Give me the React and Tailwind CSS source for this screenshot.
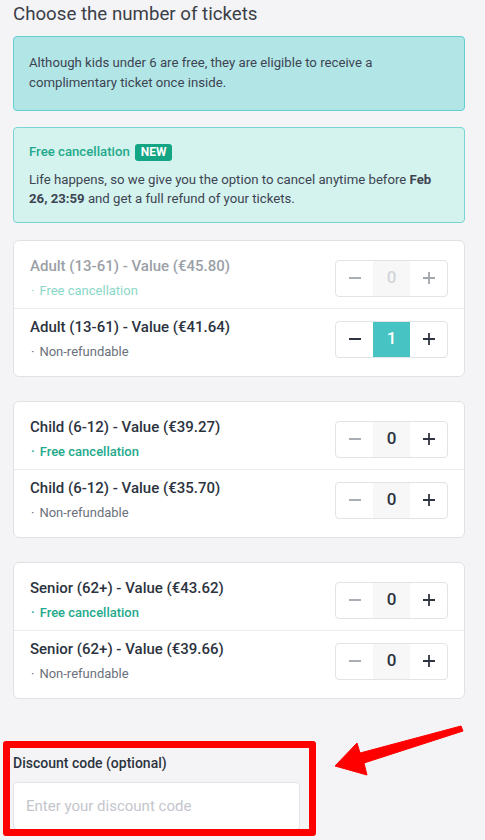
import { useState } from "react";

const groups = [
  [
    { id: "adult-flex", name: "Adult (13-61) - Value (€45.80)", flexible: true, disabled: true, qty: 0 },
    { id: "adult", name: "Adult (13-61) - Value (€41.64)", flexible: false, qty: 1 },
  ],
  [
    { id: "child-flex", name: "Child (6-12) - Value (€39.27)", flexible: true, qty: 0 },
    { id: "child", name: "Child (6-12) - Value (€35.70)", flexible: false, qty: 0 },
  ],
  [
    { id: "senior-flex", name: "Senior (62+) - Value (€43.62)", flexible: true, qty: 0 },
    { id: "senior", name: "Senior (62+) - Value (€39.66)", flexible: false, qty: 0 },
  ],
];

function MinusIcon({ className }) {
  return (
    <svg width="14" height="14" viewBox="0 0 14 14" className={className}>
      <line x1="1" y1="7" x2="13" y2="7" stroke="currentColor" strokeWidth="1.8" />
    </svg>
  );
}

function PlusIcon({ className }) {
  return (
    <svg width="14" height="14" viewBox="0 0 14 14" className={className}>
      <line x1="1" y1="7" x2="13" y2="7" stroke="currentColor" strokeWidth="1.8" />
      <line x1="7" y1="1" x2="7" y2="13" stroke="currentColor" strokeWidth="1.8" />
    </svg>
  );
}

function Stepper({ value, disabled, onChange }) {
  const active = value > 0;
  return (
    <div className="flex h-[37px] w-[113px] shrink-0 overflow-hidden rounded border border-[#e2e3e7] bg-white">
      <button
        type="button"
        onClick={() => onChange(Math.max(0, value - 1))}
        className={`flex w-[37px] items-center justify-center ${active ? "text-[#2e3440]" : "text-[#a9adb4]"}`}
      >
        <MinusIcon />
      </button>
      <div
        className={`flex w-[37px] items-center justify-center text-[17px] font-medium ${
          active ? "bg-[#47c3c4] text-white" : disabled ? "bg-[#f7f7f8] text-[#d3d5d9]" : "bg-[#f7f7f8] text-[#2c3340]"
        }`}
      >
        {value}
      </div>
      <button
        type="button"
        onClick={() => !disabled && onChange(value + 1)}
        className={`flex w-[37px] items-center justify-center ${disabled ? "text-[#a2a6ad]" : "text-[#2e3440]"}`}
      >
        <PlusIcon />
      </button>
    </div>
  );
}

function TicketRow({ ticket, qty, onChange, last }) {
  return (
    <div className={`flex items-center justify-between px-4 py-2 ${last ? "" : "border-b border-[#ececef]"}`}>
      <div>
        <div className={`text-[15px] font-medium leading-5 ${ticket.disabled ? "text-[#9b9fa7]" : "text-[#2c3340]"}`}>
          {ticket.name}
        </div>
        <div
          className={`mt-[6px] flex items-center text-[13px] leading-[18px] ${
            ticket.flexible
              ? ticket.disabled
                ? "text-[#8cd8c9]"
                : "font-medium text-[#22a98b]"
              : "text-[#6b717c]"
          }`}
        >
          <span className="ml-[1px] mr-[5px]">·</span>
          {ticket.flexible ? "Free cancellation" : "Non-refundable"}
        </div>
      </div>
      <Stepper value={qty} disabled={ticket.disabled} onChange={onChange} />
    </div>
  );
}

export default function App() {
  const [qty, setQty] = useState(() =>
    Object.fromEntries(groups.flat().map((t) => [t.id, t.qty]))
  );
  const [code, setCode] = useState("");

  return (
    <div className="relative min-h-[840px] overflow-hidden bg-[#f4f4f6] pl-[13px] pr-[20px] pt-[1px] font-['Roboto',sans-serif]">
      <h1 className="text-[18.7px] leading-[26px] text-[#3b3f48]">Choose the number of tickets</h1>

      <div className="mt-[9px] rounded border border-[#62cfd1] bg-[#b2e6e6] px-[15px] pb-[17px] pt-4 text-[13.2px] leading-5 text-[#3d4452]">
        Although kids under 6 are free, they are eligible to receive a complimentary ticket once inside.
      </div>

      <div className="mt-4 rounded border border-[#7ad4d4] bg-[#d4f3ee] px-[15px] pb-[14px] pt-[14px] text-[13.2px] text-[#3d4452]">
        <div className="flex items-center gap-[5px] leading-5">
          <span className="font-medium text-[#22a98b]">Free cancellation</span>
          <span className="rounded-[3px] bg-[#13a584] px-[6px] text-[12px] font-bold leading-[17px] text-white">NEW</span>
        </div>
        <p className="mt-2 leading-[19px]">
          Life happens, so we give you the option to cancel anytime before <b className="font-bold">Feb 26, 23:59</b> and
          get a full refund of your tickets.
        </p>
      </div>

      <div className="mt-[17px] flex flex-col gap-6">
        {groups.map((group, i) => (
          <div key={i} className="rounded-md border border-[#e1e1e5] bg-white py-[7px]">
            {group.map((t, j) => (
              <TicketRow
                key={t.id}
                ticket={t}
                qty={qty[t.id]}
                last={j === group.length - 1}
                onChange={(v) => setQty((p) => ({ ...p, [t.id]: v }))}
              />
            ))}
          </div>
        ))}
      </div>

      <div className="relative mt-[54px] w-[287px]">
        <label className="block text-[14px] font-medium leading-5 text-[#2c3340]">Discount code (optional)</label>
        <input
          value={code}
          onChange={(e) => setCode(e.target.value)}
          placeholder="Enter your discount code"
          className="mt-[9px] h-[48px] w-full rounded border border-[#e4e4e8] bg-white px-3 text-[15px] text-[#2c3340] outline-none placeholder:text-[#c3c6cc]"
        />
        {/* highlight frame around the discount field */}
        <div className="pointer-events-none absolute left-[-10px] right-[-16px] top-[-12px] h-[95px] rounded-[3px] border-[7px] border-[#ff0000]" />
      </div>

      {/* pointer arrow */}
      <svg className="pointer-events-none absolute left-0 top-0" width="485" height="840" viewBox="0 0 485 840">
        <polygon
          points="335,766 357,743 360,753 461,726 463,731 364,763 367,775"
          fill="#ff0000"
          stroke="#ff0000"
          strokeWidth="1"
          strokeLinejoin="round"
        />
      </svg>
    </div>
  );
}
